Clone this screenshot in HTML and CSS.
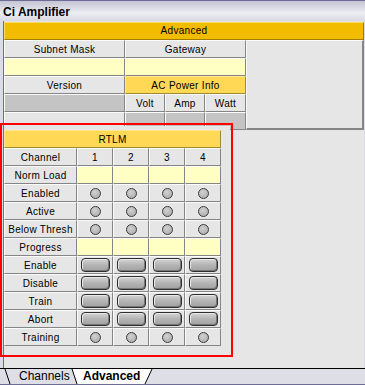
FILE: index.html
```html
<!DOCTYPE html>
<html lang="en">
<head>
    <meta charset="UTF-8">
    <title>Ci Amplifier</title>
    <link rel="stylesheet" href="styles.css">
</head>
<body>
    <div class="titlebar">Ci Amplifier</div>
    <div class="panel">
        <div class="hdr-advanced">Advanced</div>
        <!-- network / power info -->
        <div class="net-grid">
            <div class="cell side"></div>
            <div class="cell">Subnet Mask</div>
            <div class="cell wide">Gateway</div>
            <div class="cell field"></div>
            <div class="cell field wide"></div>
            <div class="cell">Version</div>
            <div class="cell accent wide">AC Power Info</div>
            <div class="cell value"></div>
            <div class="cell">Volt</div>
            <div class="cell">Amp</div>
            <div class="cell">Watt</div>
            <div class="cell"></div>
            <div class="cell value"></div>
            <div class="cell value"></div>
            <div class="cell value"></div>
        </div>
        <!-- RTLM group -->
        <div class="rtlm-group">
            <div class="rtlm">
                <div class="cell accent rtlm-head">RTLM</div>

                <div class="cell">Channel</div>
                <div class="cell">1</div><div class="cell">2</div><div class="cell">3</div><div class="cell">4</div>

                <div class="cell">Norm Load</div>
                <div class="cell field"></div><div class="cell field"></div><div class="cell field"></div><div class="cell field"></div>

                <div class="cell">Enabled</div>
                <div class="cell"><span class="led"></span></div><div class="cell"><span class="led"></span></div><div class="cell"><span class="led"></span></div><div class="cell"><span class="led"></span></div>

                <div class="cell">Active</div>
                <div class="cell"><span class="led"></span></div><div class="cell"><span class="led"></span></div><div class="cell"><span class="led"></span></div><div class="cell"><span class="led"></span></div>

                <div class="cell">Below Thresh</div>
                <div class="cell"><span class="led"></span></div><div class="cell"><span class="led"></span></div><div class="cell"><span class="led"></span></div><div class="cell"><span class="led"></span></div>

                <div class="cell">Progress</div>
                <div class="cell field"></div><div class="cell field"></div><div class="cell field"></div><div class="cell field"></div>

                <div class="cell">Enable</div>
                <div class="cell"><span class="btn"></span></div><div class="cell"><span class="btn"></span></div><div class="cell"><span class="btn"></span></div><div class="cell"><span class="btn"></span></div>

                <div class="cell">Disable</div>
                <div class="cell"><span class="btn"></span></div><div class="cell"><span class="btn"></span></div><div class="cell"><span class="btn"></span></div><div class="cell"><span class="btn"></span></div>

                <div class="cell">Train</div>
                <div class="cell"><span class="btn"></span></div><div class="cell"><span class="btn"></span></div><div class="cell"><span class="btn"></span></div><div class="cell"><span class="btn"></span></div>

                <div class="cell">Abort</div>
                <div class="cell"><span class="btn"></span></div><div class="cell"><span class="btn"></span></div><div class="cell"><span class="btn"></span></div><div class="cell"><span class="btn"></span></div>

                <div class="cell">Training</div>
                <div class="cell"><span class="led"></span></div><div class="cell"><span class="led"></span></div><div class="cell"><span class="led"></span></div><div class="cell"><span class="led"></span></div>
            </div>
        </div>
    </div>
    <div class="tabs">
        <svg width="365" height="15" viewBox="0 0 365 15">
            <line x1="5" y1="0" x2="10" y2="15" stroke="#000" stroke-width="1"/>
            <polygon points="72,0 152,0 145,15 77,15" fill="#fff"/>
            <line x1="72" y1="0" x2="77" y2="15" stroke="#000" stroke-width="1"/>
            <line x1="152" y1="0" x2="145" y2="15" stroke="#000" stroke-width="1"/>
            <text x="19" y="11" class="tab-text">Channels</text>
            <text x="83" y="11" class="tab-text tab-active">Advanced</text>
        </svg>
    </div>
    <div class="annotation"></div>
</body>
</html>
```

FILE: styles.css
```css
body, html {
    margin: 0;
    padding: 0;
    font-family: 'Liberation Sans', Arial, sans-serif;
    background-color: #dcdce6;
}
body {
    width: 365px;
    height: 385px;
    position: relative;
    overflow: hidden;
}
.titlebar {
    border-top: 1px solid #6c6c94;
    padding: 3px 0 0 3px;
    box-sizing: border-box;
    height: 21px;
    line-height: 17px;
    font-size: 12px;
    font-weight: bold;
    background: linear-gradient(#c4c4d4, #ececf2 60%, #d8d8e2);
}
.panel {
    margin-left: 3px;
    width: 361px;
    height: 347px;
    box-sizing: border-box;
    border-left: 1px solid #6c6c94;
    padding-top: 1px;
    background-color: #e6e6e6;
}
.hdr-advanced {
    height: 18px;
    box-sizing: border-box;
    background-color: #f2bd00;
    border: 1px solid;
    border-color: #f8d860 #a07c00 #a07c00 #f8d860;
    font-size: 10px;
    letter-spacing: 0.3px;
    line-height: 16px;
    text-align: center;
}
.cell {
    box-sizing: border-box;
    background-color: #e6e6e6;
    border: 1px solid;
    border-color: #fbfbfb #858585 #858585 #fbfbfb;
    display: flex;
    align-items: center;
    justify-content: center;
    font-size: 10px;
    letter-spacing: 0.3px;
    color: #000;
}
.cell.field {
    background-color: #ffffc4;
}
.cell.value {
    background-color: #c4c4c4;
}
.cell.accent {
    background-color: #ffd855;
    border-color: #ffe890 #a08a30 #a08a30 #ffe890;
}
.net-grid {
    display: grid;
    grid-template-columns: 121px 40px 40px 41px 118px;
    grid-template-rows: repeat(5, 18px);
}
.net-grid .wide {
    grid-column: span 3;
}
.net-grid .side {
    grid-column: 5;
    grid-row: 1 / 6;
    border-right-width: 2px;
    border-bottom-width: 2px;
}
.rtlm-group {
    position: relative;
    width: 226px;
    margin-top: -4px;
    padding-top: 4px;
    background-color: #e6e6e6;
}
.rtlm {
    display: grid;
    grid-template-columns: 73px repeat(4, 36px);
    grid-auto-rows: 18px;
}
.rtlm-head {
    grid-column: 1 / 6;
}
.led {
    width: 9px;
    height: 9px;
    border-radius: 50%;
    border: 1px solid #3a3a3a;
    background: radial-gradient(circle at 40% 35%, #d0d0d0, #a8a8a8);
}
.btn {
    width: 27px;
    height: 12px;
    border-radius: 4px;
    border: 1px solid #2e2e2e;
    background: linear-gradient(#d4d4d4, #b4b4b4 50%, #a0a0a0);
    box-shadow: inset -1px -1px 0 #787878, inset 1px 1px 0 #e8e8e8;
}
.tabs {
    height: 17px;
    box-sizing: border-box;
    border-top: 1px solid #000;
    border-bottom: 1px solid #6c6c94;
    background-color: #dedee6;
}
.tabs svg {
    display: block;
}
.tab-text {
    font-family: 'Liberation Sans', Arial, sans-serif;
    font-size: 12px;
    fill: #000;
}
.tab-active {
    font-weight: bold;
}
.annotation {
    position: absolute;
    left: 0;
    top: 123px;
    width: 233px;
    height: 234px;
    box-sizing: border-box;
    border: 2px solid #ff0000;
}
```
